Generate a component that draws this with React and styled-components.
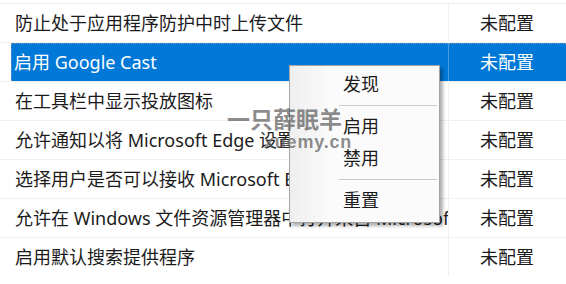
import React from 'react'
import styled, { createGlobalStyle } from 'styled-components';

const GlobalStyle = createGlobalStyle`
  html, body {
    margin: 0;
    padding: 0;
    background: #ffffff;
    overflow: hidden;
  }
  body {
    font-family: "Noto Sans", "Noto Sans CJK SC", sans-serif;
  }
`;

const Screen = styled.div`
  position: relative;
  width: 566px;
  height: 284px;
  overflow: hidden;
  background: #ffffff;
`;

const PolicyList = styled.div`
  display: flex;
  flex-direction: column;
  padding-top: 3px;
`;

const Row = styled.div`
  display: flex;
  height: 39px;
  box-sizing: border-box;
  border-top: 1px solid #efefef;
  font-size: 18px;
  color: ${p => (p.$selected ? '#ffffff' : '#1b1b1b')};
`;

const NameCell = styled.div`
  margin-left: 11px;
  width: 437px;
  box-sizing: border-box;
  padding-bottom: 3px;
  display: flex;
  align-items: center;
  white-space: nowrap;
  overflow: hidden;
  background: ${p => (p.$selected ? '#0078d7' : 'transparent')};
  border-top: 1px dotted ${p => (p.$selected ? '#7a9cc0' : 'transparent')};
  border-left: 1px dotted ${p => (p.$selected ? '#7a9cc0' : 'transparent')};
  padding-left: ${p => (p.$selected ? '2px' : '3px')};
`;

const StatusCell = styled.div`
  flex: 1;
  display: flex;
  align-items: center;
  padding-left: 31px;
  padding-bottom: 3px;
  border-left: 1px solid ${p => (p.$selected ? '#4c9be2' : '#efefef')};
  background: ${p => (p.$selected ? '#0078d7' : 'transparent')};
  border-top: 1px dotted ${p => (p.$selected ? '#7a9cc0' : 'transparent')};
`;

const Menu = styled.div`
  position: absolute;
  left: 289px;
  top: 65px;
  width: 151px;
  box-sizing: border-box;
  padding: 2px 0 6px;
  border: 1px solid #a3a3a3;
  background: linear-gradient(to right, #efefef 0, #f7f7f7 30px, #fbfbfb 37px, #fbfbfb 100%);
  box-shadow: 3px 3px 3px rgba(0, 0, 0, 0.3);
  font-size: 18px;
  color: #1b1b1b;
`;

const MenuItem = styled.div`
  height: 32px;
  line-height: 32px;
  padding-left: 53px;
`;

const MenuSeparator = styled.div`
  height: 10px;
  margin: 0 2px 0 49px;
  position: relative;
  &::after {
    content: '';
    position: absolute;
    left: 0;
    right: 0;
    top: 5px;
    height: 1px;
    background: #c9c9c9;
  }
`;

const Watermark = styled.div`
  position: absolute;
  left: 227px;
  top: 104px;
  display: flex;
  flex-direction: column;
  pointer-events: none;
  color: rgba(95, 95, 95, 0.72);
  font-weight: 700;
  .name {
    font-family: "Noto Sans CJK SC", sans-serif;
    font-size: 23px;
    line-height: 28px;
  }
  .site {
    font-family: "Liberation Sans", Arial, sans-serif;
    font-size: 18px;
    line-height: 20px;
    margin-left: 37px;
    letter-spacing: 0.8px;
  }
`;

const policies = [
  { name: '防止处于应用程序防护中时上传文件', state: '未配置' },
  { name: '启用 Google Cast', state: '未配置', selected: true },
  { name: '在工具栏中显示投放图标', state: '未配置' },
  { name: '允许通知以将 Microsoft Edge 设置为默认浏览器', state: '未配置' },
  { name: '选择用户是否可以接收 Microsoft Edge 的推荐', state: '未配置' },
  { name: '允许在 Windows 文件资源管理器中打开来自 Microsoft Edge 的本地文件', state: '未配置' },
  { name: '启用默认搜索提供程序', state: '未配置' },
];

function App() {
  return (
    <Screen>
      <GlobalStyle />
      <PolicyList>
        {policies.map(p => (
          <Row key={p.name} $selected={p.selected}>
            <NameCell $selected={p.selected}>{p.name}</NameCell>
            <StatusCell $selected={p.selected}>{p.state}</StatusCell>
          </Row>
        ))}
      </PolicyList>

      <Menu>
        <MenuItem>发现</MenuItem>
        <MenuSeparator />
        <MenuItem>启用</MenuItem>
        <MenuItem>禁用</MenuItem>
        <MenuSeparator />
        <MenuItem>重置</MenuItem>
      </Menu>

      <Watermark>
        <span className="name">一只薛眠羊</span>
        <span className="site">xuemy.cn</span>
      </Watermark>
    </Screen>
  )
}

export default App
